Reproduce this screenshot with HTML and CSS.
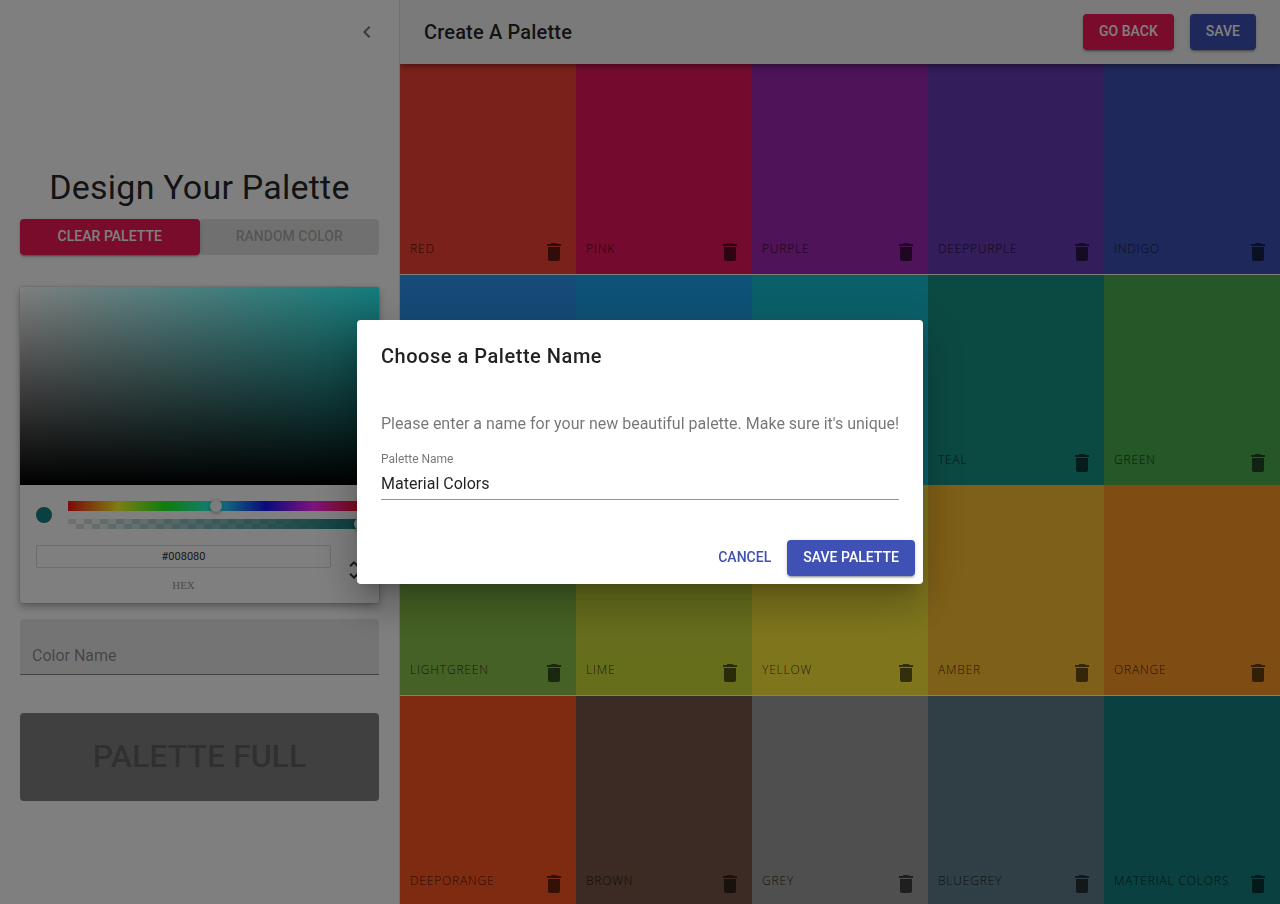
FILE: index.html
```
<!DOCTYPE html>
<html lang="en">
<head>
<meta charset="utf-8">
<title>Create A Palette</title>
<link rel="stylesheet" href="styles.css">
</head>
<body>
<svg class="defs" width="0" height="0">
  <symbol id="trash" viewBox="0 0 24 24"><path d="M6 19c0 1.1.9 2 2 2h8c1.1 0 2-.9 2-2V7H6v12zM19 4h-3.5l-1-1h-5l-1 1H5v2h14V4z"/></symbol>
</svg>
<div class="app">
  <aside class="drawer">
    <div class="drawer-header">
      <svg class="chevron" viewBox="0 0 24 24"><path d="M15.41 7.41L14 6l-6 6 6 6 1.41-1.41L10.83 12z"/></svg>
    </div>
    <div class="drawer-content">
      <h1 class="drawer-title">Design Your Palette</h1>
      <div class="button-row">
        <button class="btn btn-pink">Clear Palette</button>
        <button class="btn btn-disabled">Random Color</button>
      </div>
      <div class="picker">
        <div class="saturation"></div>
        <div class="picker-body">
          <div class="picker-controls">
            <span class="swatch"></span>
            <div class="sliders">
              <div class="hue"><span class="knob knob-hue"></span></div>
              <div class="alpha"><span class="knob knob-alpha"></span></div>
            </div>
          </div>
          <div class="picker-fields">
            <div class="hex">
              <div class="hex-input">#008080</div>
              <div class="hex-label">HEX</div>
            </div>
            <svg class="toggle" viewBox="0 0 24 24"><path d="M12,18.17L8.83,15L7.42,16.41L12,21L16.59,16.41L15.17,15M12,5.83L15.17,9L16.58,7.59L12,3L7.41,7.59L8.83,9L12,5.83Z"/></svg>
          </div>
        </div>
      </div>
      <div class="color-name">Color Name</div>
      <button class="full">Palette Full</button>
    </div>
  </aside>
  <div class="workspace">
    <header class="appbar">
      <h2 class="appbar-title">Create A Palette</h2>
      <div class="appbar-actions">
        <button class="btn btn-pink">Go Back</button>
        <button class="btn btn-blue">Save</button>
      </div>
    </header>
    <main class="grid">
      <div class="row">
        <div class="box red"><span>red</span><svg><use href="#trash"/></svg></div>
        <div class="box pink"><span>pink</span><svg><use href="#trash"/></svg></div>
        <div class="box purple"><span>purple</span><svg><use href="#trash"/></svg></div>
        <div class="box deeppurple"><span>deeppurple</span><svg><use href="#trash"/></svg></div>
        <div class="box indigo"><span>indigo</span><svg><use href="#trash"/></svg></div>
      </div>
      <div class="row">
        <div class="box blue"></div>
        <div class="box lightblue"></div>
        <div class="box cyan"></div>
        <div class="box teal"><span>teal</span><svg><use href="#trash"/></svg></div>
        <div class="box green"><span>green</span><svg><use href="#trash"/></svg></div>
      </div>
      <div class="row">
        <div class="box lightgreen"><span>lightgreen</span><svg><use href="#trash"/></svg></div>
        <div class="box lime"><span>lime</span><svg><use href="#trash"/></svg></div>
        <div class="box yellow"><span>yellow</span><svg><use href="#trash"/></svg></div>
        <div class="box amber"><span>amber</span><svg><use href="#trash"/></svg></div>
        <div class="box orange"><span>orange</span><svg><use href="#trash"/></svg></div>
      </div>
      <div class="row">
        <div class="box deeporange"><span>deeporange</span><svg><use href="#trash"/></svg></div>
        <div class="box brown"><span>brown</span><svg><use href="#trash"/></svg></div>
        <div class="box grey"><span>grey</span><svg><use href="#trash"/></svg></div>
        <div class="box bluegrey"><span>bluegrey</span><svg><use href="#trash"/></svg></div>
        <div class="box material"><span>Material Colors</span><svg><use href="#trash"/></svg></div>
      </div>
    </main>
  </div>
</div>
<div class="backdrop">
  <div class="dialog" role="dialog">
    <h2 class="dialog-title">Choose a Palette Name</h2>
    <p class="dialog-text">Please enter a name for your new beautiful palette. Make sure it's unique!</p>
    <div class="field-label">Palette Name</div>
    <div class="field-value">Material Colors</div>
    <div class="dialog-actions">
      <button class="btn btn-text">Cancel</button>
      <button class="btn btn-blue">Save Palette</button>
    </div>
  </div>
</div>
</body>
</html>
```
FILE: styles.css
```
* { box-sizing: border-box; }
body { margin: 0; height: 904px; overflow: hidden; background: #fff; font-family: Roboto, sans-serif; color: rgba(0,0,0,.87); }
h1, h2, p { margin: 0; }
.defs { position: absolute; }
.app { display: flex; height: 904px; }

.drawer { width: 400px; flex: none; border-right: 1px solid rgba(0,0,0,.12); display: flex; flex-direction: column; }
.drawer-header { height: 64px; display: flex; align-items: center; justify-content: flex-end; padding-right: 20px; }
.chevron { width: 24px; height: 24px; fill: rgba(0,0,0,.54); }
.drawer-content { width: 359px; margin-left: 20px; padding-top: 102px; display: flex; flex-direction: column; }
.drawer-title { font-size: 34px; font-weight: 400; line-height: 42px; letter-spacing: .22px; text-align: center; white-space: nowrap; }
.button-row { display: flex; margin-top: 11px; }
.button-row .btn { width: 50%; padding: 0 0 2px; }

.btn { height: 36px; border: 0; border-radius: 4px; padding: 0 16px 2px; font: 500 14px/24px Roboto, sans-serif; letter-spacing: 0.02px; text-transform: uppercase; white-space: nowrap; color: #fff; box-shadow: 0 3px 1px -2px rgba(0,0,0,.2), 0 2px 2px 0 rgba(0,0,0,.14), 0 1px 5px 0 rgba(0,0,0,.12); }
.btn-pink { background: #f21854; }
.btn-blue { background: #3f51b5; }
.btn-disabled { background: rgba(0,0,0,.12); color: rgba(0,0,0,.26); box-shadow: none; }
.btn-text { background: none; color: #3f51b5; box-shadow: none; padding: 0 8px 2px; }

.picker { margin-top: 32px; height: 316px; border-radius: 2px; background: #fff; box-shadow: 0 0 2px rgba(0,0,0,.3), 0 4px 8px rgba(0,0,0,.3); }
.saturation { height: 198px; border-radius: 2px 2px 0 0; background: linear-gradient(to top, #000, transparent), linear-gradient(to right, #fff, transparent), #28fcfa; }
.picker-body { padding: 16px; }
.picker-controls { display: flex; }
.swatch { width: 16px; height: 16px; border-radius: 50%; background: #148080; margin: 6px 16px 0 0; }
.sliders { flex: 1; }
.hue { height: 10px; position: relative; background: linear-gradient(to right, #fa1414 0%, #fafa28 17%, #1efa1e 33%, #28fafa 50%, #1414fa 67%, #fa28fa 83%, #fa1414 100%); }
.alpha { height: 10px; margin-top: 8px; position: relative; background: linear-gradient(to right, rgba(20,128,128,0), #148080), repeating-conic-gradient(#fff 0 25%, #e1e1e1 0 50%) 0 -3px / 16px 16px; }
.knob { position: absolute; top: -1px; width: 12px; height: 12px; border-radius: 50%; background: #f8f8f8; box-shadow: 0 1px 4px rgba(0,0,0,.37); }
.knob-hue { left: 142px; }
.knob-alpha { right: -3px; }
.picker-fields { display: flex; padding-top: 16px; }
.hex { width: 295px; flex: none; }
.hex-input { height: 23px; border-radius: 2px; box-shadow: inset 0 0 0 1px #dadada; font-size: 11px; line-height: 23px; text-align: center; color: #333; }
.hex-label { margin-top: 12px; font: 11px/11px "Liberation Serif", serif; text-align: center; color: #969696; }
.toggle { flex: none; width: 24px; height: 24px; margin: 13px 0 0 11px; fill: #333; }

.color-name { height: 56px; margin-top: 16px; padding: 27px 12px 0; border-radius: 4px 4px 0 0; border-bottom: 1px solid rgba(0,0,0,.42); background: rgba(0,0,0,.09); font-size: 16px; line-height: 19px; color: rgba(0,0,0,.42); }
.full { height: 88px; margin-top: 38px; border: 0; border-radius: 4px; padding: 0 0 2px; background: #808080; color: rgba(0,0,0,.26); font: 500 32px/56px Roboto, sans-serif; letter-spacing: 0; text-transform: uppercase; }

.workspace { flex: 1; display: flex; flex-direction: column; }
.appbar { height: 64px; flex: none; display: flex; align-items: center; justify-content: space-between; padding: 0 24px; background: #f5f5f5; position: relative; z-index: 1; box-shadow: 0 2px 4px -1px rgba(0,0,0,.2), 0 4px 5px 0 rgba(0,0,0,.14), 0 1px 10px 0 rgba(0,0,0,.12); clip-path: inset(0 0 -16px 0); }
.appbar-title { font-size: 20px; font-weight: 500; letter-spacing: .17px; }
.appbar-actions { display: flex; gap: 16px; }
.grid { display: flex; flex-direction: column; gap: .6px; }
.row { display: flex; height: 210px; flex: none; }
.box { width: 176px; display: flex; align-items: flex-end; justify-content: space-between; padding: 0 10px 10px; color: rgba(0,0,0,.78); font: 300 12px/18px "Open Sans", sans-serif; letter-spacing: .82px; text-transform: uppercase; white-space: nowrap; }
.box span { margin-bottom: 6px; }
.box svg { width: 24px; height: 24px; fill: rgba(0,0,0,.6); flex: none; }
.red { background: #f44336; }
.pink { background: #e8165f; }
.purple { background: #9c27b0; }
.deeppurple { background: #673ab7; }
.indigo { background: #3f51b5; }
.blue { background: #2c94f0; }
.lightblue { background: #1ca4ee; }
.cyan { background: #16bed2; }
.teal { background: #169486; }
.green { background: #4caf50; }
.lightgreen { background: #8bc34a; }
.lime { background: #cddc39; }
.yellow { background: #ffeb3b; }
.amber { background: #fec030; }
.orange { background: #fe9828; }
.deeporange { background: #ff5722; }
.brown { background: #795548; }
.grey { background: #9e9e9e; }
.bluegrey { background: #607d8b; }
.material { background: #148080; }

.backdrop { position: fixed; inset: 0; z-index: 10; display: flex; align-items: center; justify-content: center; background: rgba(0,0,0,.5); }
.dialog { width: 566px; height: 264px; display: flex; flex-direction: column; padding: 20px 24px 8px; border-radius: 4px; background: #fff; box-shadow: 0 11px 15px -7px rgba(0,0,0,.2), 0 24px 38px 3px rgba(0,0,0,.14), 0 9px 46px 8px rgba(0,0,0,.12); }
.dialog-title { font-size: 20px; line-height: 32px; font-weight: 500; letter-spacing: .53px; }
.dialog-text { margin-top: 40px; font-size: 16px; line-height: 24px; letter-spacing: 0; color: rgba(0,0,0,.54); white-space: nowrap; }
.field-label { margin-top: 16px; font-size: 12px; line-height: 14px; color: rgba(0,0,0,.54); }
.field-value { height: 34px; padding-top: 8px; font-size: 16px; line-height: 19px; border-bottom: 1px solid rgba(0,0,0,.42); }
.dialog-actions { display: flex; justify-content: flex-end; gap: 8px; margin: auto -16px 0 0; }
```
